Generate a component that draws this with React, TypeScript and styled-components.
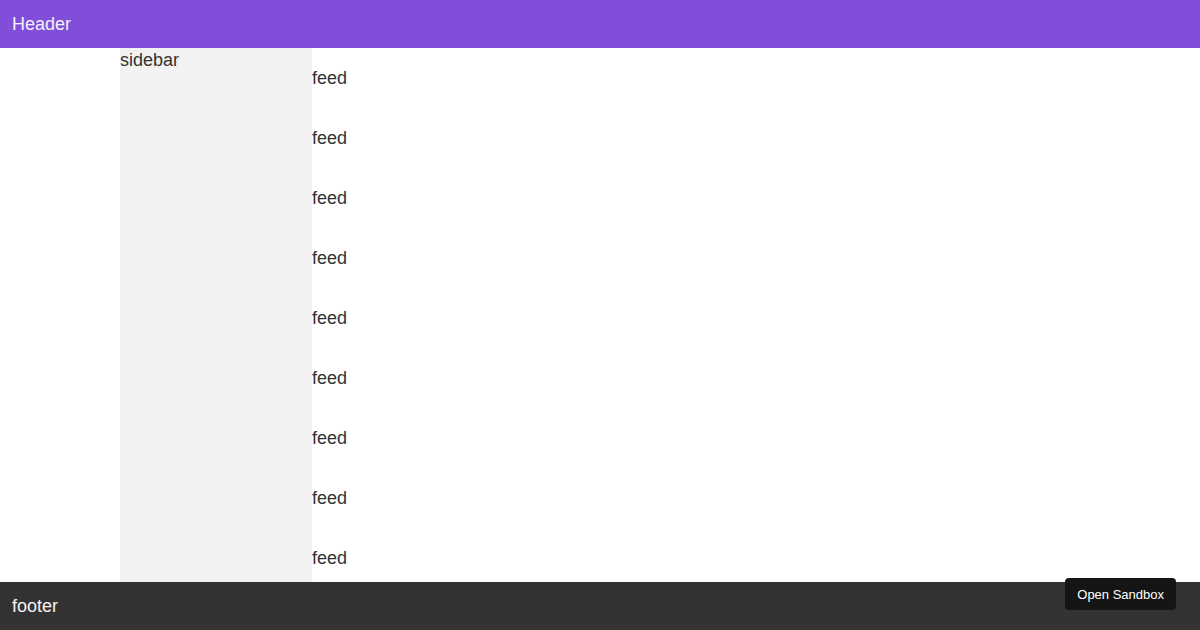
import React from "react";
import styled, { createGlobalStyle } from "styled-components";

const Global = createGlobalStyle`
  html, body { margin: 0; padding: 0; height: 100%; }
  body { font-family: "Liberation Sans", Arial, sans-serif; color: #333; }
  #root { height: 100%; }
`;

const Page = styled.div`
  height: 100vh;
  display: flex;
  flex-direction: column;
  overflow: hidden;
`;

const Header = styled.header`
  flex: 0 0 48px;
  background: #804ed9;
  color: #f4f0fb;
  font-size: 18px;
  display: flex;
  align-items: center;
  padding: 0 12px;
`;

const Main = styled.main`
  flex: 1 1 auto;
  min-height: 0;
  display: flex;
  padding-left: 120px;
  overflow: hidden;
`;

const Sidebar = styled.aside`
  flex: 0 0 192px;
  background: #f2f2f2;
  font-size: 18px;
  line-height: 24px;
`;

const Feed = styled.div`
  flex: 1 1 auto;
  display: flex;
  flex-direction: column;
`;

const FeedItem = styled.div`
  flex: 0 0 auto;
  font-size: 18px;
  line-height: 20px;
  padding: 20px 0;
`;

const Footer = styled.footer`
  position: relative;
  flex: 0 0 48px;
  background: #333;
  color: #f4f4f4;
  font-size: 18px;
  display: flex;
  align-items: center;
  padding: 0 12px;
`;

const SandboxButton = styled.button`
  position: absolute;
  right: 24px;
  top: -4px;
  height: 32px;
  padding: 0 12px;
  border: none;
  border-radius: 4px;
  background: #151515;
  color: #fff;
  font-family: "Liberation Sans", Arial, sans-serif;
  font-size: 13px;
  cursor: pointer;
`;

export default function App() {
  return (
    <Page>
      <Global />
      <Header>Header</Header>
      <Main>
        <Sidebar>sidebar</Sidebar>
        <Feed>
          {Array.from({ length: 9 }).map((_, i) => (
            <FeedItem key={i}>feed</FeedItem>
          ))}
        </Feed>
      </Main>
      <Footer>
        footer
        <SandboxButton>Open Sandbox</SandboxButton>
      </Footer>
    </Page>
  );
}
